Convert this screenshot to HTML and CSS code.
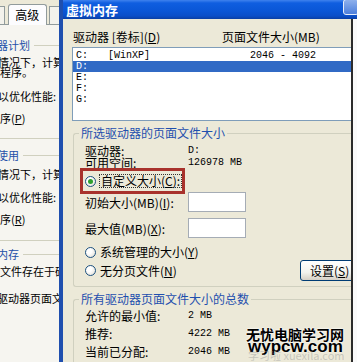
FILE: index.html
```html
<!DOCTYPE html>
<html lang="zh-CN">
<head>
    <meta charset="UTF-8">
    <title>虚拟内存</title>
    <link rel="stylesheet" href="styles.css">
</head>
<body>
<div class="screen">
    <div class="back">
        <div class="tabs">
            <span class="tab-edge"></span>
            <span class="tab">高级</span>
            <span class="tab-edge right"></span>
        </div>
        <div class="panel">
            <div class="ln grp g1 mt14"><span>器计划</span></div>
            <div class="ln tight mt6 cut">情况下，计算</div>
            <div class="ln tight">程序。</div>
            <div class="ln mt13 cut">以优化性能:</div>
            <div class="ln mt10">序(<u>P</u>)</div>
            <div class="sep mt14"></div>
            <div class="ln grp g2 mt10"><span>使用</span></div>
            <div class="ln mt7 cut">情况下，计算</div>
            <div class="ln mt11 cut">以优化性能:</div>
            <div class="ln mt10">序(<u>R</u>)</div>
            <div class="sep mt15"></div>
            <div class="ln grp g3 mt7"><span>内存</span></div>
            <div class="ln mt5">文件存在于硬</div>
            <div class="ln mt15 deep">驱动器页面文</div>
        </div>
    </div>

    <div class="dialog">
        <div class="titlebar">
            <span class="title">虚拟内存</span>
            <span class="help"></span>
        </div>
        <div class="frame">
            <div class="content">
                <div class="list-head">
                    <span class="col1">驱动器 [卷标](<u>D</u>)</span>
                    <span>页面文件大小(MB)</span>
                </div>
                <div class="drives">
                    <div class="drive"><span class="name">C:</span><span class="vol">[WinXP]</span><span>2046 - 4092</span></div>
                    <div class="drive sel"><span class="name">D:</span></div>
                    <div class="drive"><span class="name">E:</span></div>
                    <div class="drive"><span class="name">F:</span></div>
                    <div class="drive"><span class="name">G:</span></div>
                </div>

                <fieldset class="box">
                    <legend>所选驱动器的页面文件大小</legend>
                    <div class="kv"><span class="k">驱动器:</span><span class="m">D:</span></div>
                    <div class="kv"><span class="k">可用空间:</span><span class="m">126978 MB</span></div>
                    <div class="opt custom">
                        <span class="radio on"></span><span class="focus">自定义大小(<u>C</u>):</span>
                        <span class="mark"></span>
                    </div>
                    <div class="field"><span class="k">初始大小(MB)(<u>I</u>):</span><span class="input"></span></div>
                    <div class="field second"><span class="k">最大值(MB)(<u>X</u>):</span><span class="input"></span></div>
                    <div class="opt sys"><span class="radio"></span>系统管理的大小(<u>Y</u>)</div>
                    <div class="opt last"><span class="radio"></span>无分页文件(<u>N</u>)<button class="set">设置(<u>S</u>)</button></div>
                </fieldset>

                <fieldset class="box totals">
                    <legend>所有驱动器页面文件大小的总数</legend>
                    <div class="kv"><span class="k">允许的最小值:</span><span class="m">2 MB</span></div>
                    <div class="kv"><span class="k">推荐:</span><span class="m">4222 MB</span></div>
                    <div class="kv"><span class="k">当前已分配:</span><span class="m">2046 MB</span></div>
                </fieldset>

                <div class="watermark">
                    <div class="wm-cn">无忧电脑学习网</div>
                    <div class="wm-en">wypcw.com</div>
                    <div class="wm-faint">学习啦 xuexila.com</div>
                </div>
            </div>
            <div class="edge"></div>
        </div>
    </div>
</div>
</body>
</html>
```

FILE: styles.css
```css
body {
    margin: 0;
    width: 357px;
    height: 362px;
    overflow: hidden;
    font-family: "Noto Sans CJK SC", sans-serif;
    font-size: 12px;
    color: #000;
}

.screen {
    display: flex;
    height: 362px;
}

/* window behind: performance options, advanced tab */
.back {
    width: 59px;
    flex-shrink: 0;
    background: #f6f5f0;
    overflow: hidden;
    font-size: 11px;
}

.tabs {
    height: 25px;
    box-sizing: border-box;
    display: flex;
    align-items: flex-end;
    background: #ece9d8;
    border-bottom: 1px solid #919b9c;
}

.tab-edge {
    width: 4px;
    height: 17px;
    border: 1px solid #919b9c;
    border-left: none;
    border-bottom: none;
    background: #f3f2ec;
}

.tab-edge.right {
    width: 10px;
    margin-left: 2px;
    border-left: 1px solid #919b9c;
    border-right: none;
}

.tab {
    width: 45px;
    height: 21px;
    box-sizing: border-box;
    margin-left: 3px;
    margin-bottom: -1px;
    padding-top: 3px;
    text-align: center;
    font-size: 12px;
    line-height: 14px;
    background: #fcfcfe;
    border: 1px solid #919b9c;
    border-bottom: none;
    border-radius: 3px 3px 0 0;
}

.ln {
    height: 12px;
    line-height: 12px;
    white-space: nowrap;
}

.ln.tight {
    height: 10px;
    line-height: 10px;
}

.ln.cut { margin-left: -2px; }
.ln.deep { margin-left: -3px; }

.grp {
    display: flex;
    align-items: center;
    color: #2350a8;
}

.grp::after {
    content: "";
    flex: 1;
    height: 1px;
    margin-left: 4px;
    background: #d0d0bf;
}

.g1, .g2, .g3 { margin-left: -3px; }

.sep {
    height: 1px;
    background: #d0d0bf;
}

.mt5 { margin-top: 5px; }
.mt6 { margin-top: 6px; }
.mt7 { margin-top: 7px; }
.mt10 { margin-top: 10px; }
.mt11 { margin-top: 11px; }
.mt13 { margin-top: 13px; }
.mt14 { margin-top: 14px; }
.mt15 { margin-top: 15px; }

/* front dialog */
.dialog {
    flex: 1;
    min-width: 0;
    display: flex;
    flex-direction: column;
    border-left: 4px solid #1f4fae;
}

.titlebar {
    height: 19px;
    flex-shrink: 0;
    display: flex;
    align-items: flex-start;
    overflow: hidden;
    background: linear-gradient(#3f82ee 0, #0f5ee0 3px, #0a56d6 11px, #0a4ec8 16px, #0a3fa4 19px);
}

.title {
    padding-left: 3px;
    color: #fff;
    font-weight: bold;
    font-size: 13px;
    line-height: 19px;
}

.help {
    margin-left: auto;
    margin-top: -1px;
    margin-right: -2px;
    width: 16px;
    height: 16px;
    box-sizing: border-box;
    border: 1px solid #e8eefa;
    border-radius: 3px;
    background: linear-gradient(#8eb0ec, #4d7fdc);
}

.frame {
    flex: 1;
    min-height: 0;
    display: flex;
}

.content {
    width: 288px;
    flex-shrink: 0;
    box-sizing: border-box;
    padding: 12px 0 0 9px;
    position: relative;
    overflow: hidden;
    background: #ece9d8;
}

.edge {
    flex: 1;
    border-left: 2px solid #2b2b2b;
    background: #fafafa;
}

.list-head {
    display: flex;
    height: 12px;
    line-height: 12px;
    padding-left: 1px;
    white-space: nowrap;
}

.list-head .col1 { width: 149px; }

.drives {
    height: 74px;
    box-sizing: border-box;
    margin-top: 4px;
    margin-right: -20px;
    padding-top: 2px;
    background: #fff;
    border: 1px solid #7f9db9;
    border-right: none;
}

.drive {
    display: flex;
    height: 11px;
    line-height: 11px;
    padding-left: 3px;
    font-family: "Liberation Mono", monospace;
    font-size: 10px;
    white-space: nowrap;
}

.drive .name { width: 32px; }
.drive .vol { width: 142px; }

.drive.sel {
    background: #316ac5;
    color: #fff;
}

.box {
    width: 302px;
    min-width: 0;
    box-sizing: border-box;
    margin: 6px 0 0 1px;
    padding: 6px 0 5px 11px;
    border: 1px solid #d0d0bf;
    border-right: none;
    border-radius: 3px 0 0 3px;
}

.box legend {
    margin-left: -6px;
    padding: 0 2px;
    color: #1f4fae;
    font-size: 12px;
    line-height: 12px;
}

.kv {
    display: flex;
    height: 12px;
    line-height: 12px;
    white-space: nowrap;
}

.k {
    width: 103px;
    flex-shrink: 0;
    white-space: nowrap;
}

.m {
    font-family: "Liberation Mono", monospace;
    font-size: 10px;
}

.totals { padding-top: 4px; }

.totals .kv {
    height: 14px;
    line-height: 14px;
    margin-bottom: 4px;
}

.opt {
    display: flex;
    align-items: center;
    height: 14px;
    line-height: 14px;
    white-space: nowrap;
}

.radio {
    position: relative;
    width: 11px;
    height: 11px;
    box-sizing: border-box;
    margin-right: 4px;
    border: 1px solid #1c5180;
    border-radius: 50%;
    background: radial-gradient(circle at 35% 35%, #fff 30%, #dcd9cf);
}

.radio.on::after {
    content: "";
    position: absolute;
    left: 2px;
    top: 2px;
    width: 5px;
    height: 5px;
    border-radius: 50%;
    background: #2ea02e;
}

.custom {
    position: relative;
    margin-top: 5px;
}

.focus {
    padding: 0 1px;
    margin-left: -1px;
    line-height: 12px;
    border: 1px dotted #333;
}

/* red annotation drawn over the screenshot */
.mark {
    position: absolute;
    left: -5px;
    top: -6px;
    width: 105px;
    height: 26px;
    box-sizing: border-box;
    border: 3px solid #a8322c;
}

.field {
    display: flex;
    align-items: center;
    height: 20px;
    margin-top: 4px;
    white-space: nowrap;
}

.field.second { margin-top: 6px; }

.input {
    width: 58px;
    height: 20px;
    box-sizing: border-box;
    background: #fff;
    border: 1px solid #a5acb5;
}

.sys { margin-top: 7px; }

.last {
    height: 21px;
    margin-top: 1px;
}

.set {
    margin-left: auto;
    width: 75px;
    height: 21px;
    padding: 0 0 0 9px;
    text-align: left;
    font-family: "Noto Sans CJK SC", sans-serif;
    font-size: 12px;
    line-height: 19px;
    color: #000;
    background: linear-gradient(#ffffff, #f3f3ee 60%, #d6d0c5);
    border: 1px solid #003c74;
    border-radius: 3px;
}

.watermark {
    position: absolute;
    left: 183px;
    top: 307px;
    white-space: nowrap;
}

.wm-cn {
    font-size: 14px;
    font-weight: bold;
    line-height: 16px;
    text-shadow: 0 0 2px #fff, 0 0 2px #fff;
}

.wm-en {
    margin-top: -4px;
    margin-left: 2px;
    font-family: "Liberation Sans", sans-serif;
    font-size: 17px;
    font-weight: bold;
    line-height: 17px;
    text-shadow: 0 0 2px #fff;
}

.wm-faint {
    margin-top: -6px;
    margin-left: 2px;
    font-size: 11px;
    line-height: 12px;
    color: rgba(150, 150, 150, 0.45);
}
```
